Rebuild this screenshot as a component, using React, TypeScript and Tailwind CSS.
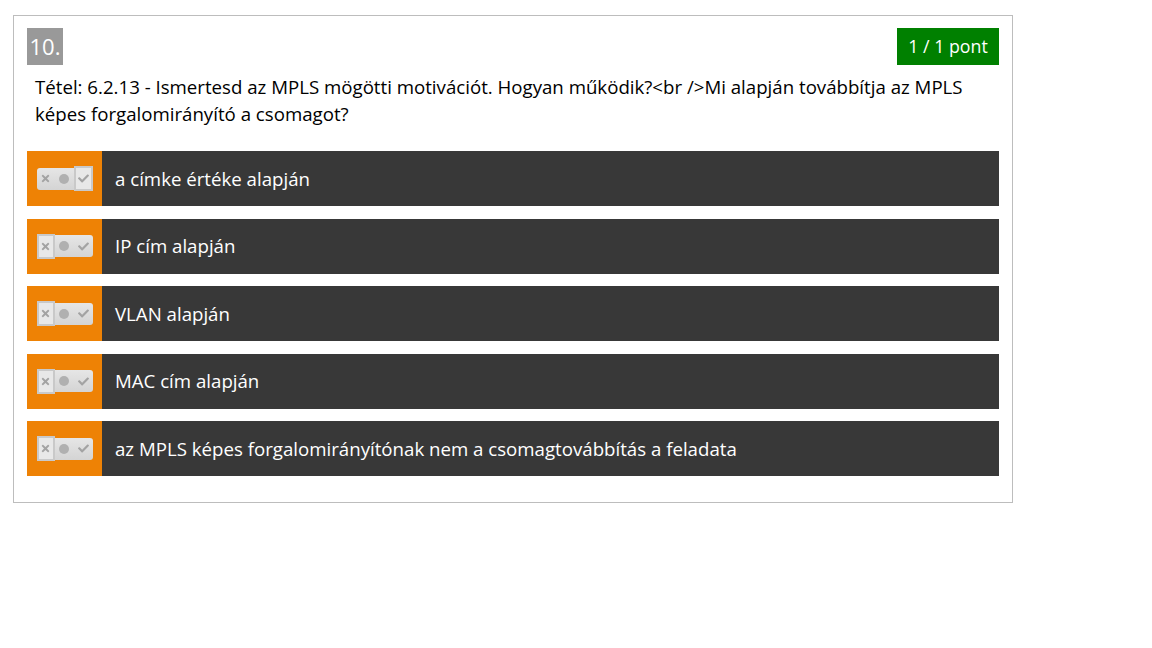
import { FaCheck, FaTimes } from "react-icons/fa";

type Answer = {
  text: string;
  state: "yes" | "no";
};

const answers: Answer[] = [
  { text: "a címke értéke alapján", state: "yes" },
  { text: "IP cím alapján", state: "no" },
  { text: "VLAN alapján", state: "no" },
  { text: "MAC cím alapján", state: "no" },
  { text: "az MPLS képes forgalomirányítónak nem a csomagtovábbítás a feladata", state: "no" },
];

const Toggle = ({ state }: { state: Answer["state"] }) => (
  <div className="relative flex h-[22px] w-[56px] items-center rounded-[3px] bg-gradient-to-b from-[#e6e6e6] to-[#d4d4d4] text-[#a3a3a3]">
    <div
      className={
        state === "no"
          ? "flex h-[25px] w-[18px] items-center justify-center border-2 border-[#c9c9c9] bg-[#e8e8e8]"
          : "flex h-[22px] w-[18px] items-center justify-center"
      }
    >
      <FaTimes size={11} />
    </div>
    <div className="flex flex-1 items-center justify-center">
      <div className="h-[10px] w-[10px] rounded-full bg-[#b0b0b0]" />
    </div>
    <div
      className={
        state === "yes"
          ? "flex h-[25px] w-[19px] items-center justify-center border-2 border-[#c9c9c9] bg-[#e8e8e8]"
          : "flex h-[22px] w-[19px] items-center justify-center"
      }
    >
      <FaCheck size={11} />
    </div>
  </div>
);

const App = () => {
  return (
    <div className="min-h-[648px] bg-white pl-[13px] pt-[15px]" style={{ fontFamily: '"Open Sans", sans-serif' }}>
      <div className="flex w-[1000px] flex-col border border-[#bdbdbd] px-[13px] pb-[26px] pt-[12px]">
        <div className="flex items-start justify-between">
          <div className="flex h-[37px] w-[36px] items-center justify-center bg-[#999999] text-[22px] text-white">
            10.
          </div>
          <div className="flex h-[37px] w-[102px] items-center justify-center bg-[#008000] text-[17.8px] text-white">
            1 / 1 pont
          </div>
        </div>
        <p className="mt-[8px] pl-[8px] pr-[10px] text-[18.67px] leading-[27px] text-black">
          Tétel: 6.2.13 - Ismertesd az MPLS mögötti motivációt. Hogyan működik?&lt;br /&gt;Mi alapján továbbítja az MPLS
          képes forgalomirányító a csomagot?
        </p>
        <div className="mt-[24px] flex flex-col gap-[12.5px]">
          {answers.map((answer) => (
            <div className="flex h-[55px]" key={answer.text}>
              <div className="flex w-[75px] items-center justify-center bg-[#ee8205]">
                <Toggle state={answer.state} />
              </div>
              <div className="flex flex-1 items-center bg-[#383838] pl-[13px] text-[18.67px] text-white">
                {answer.text}
              </div>
            </div>
          ))}
        </div>
      </div>
    </div>
  );
};

export default App;
